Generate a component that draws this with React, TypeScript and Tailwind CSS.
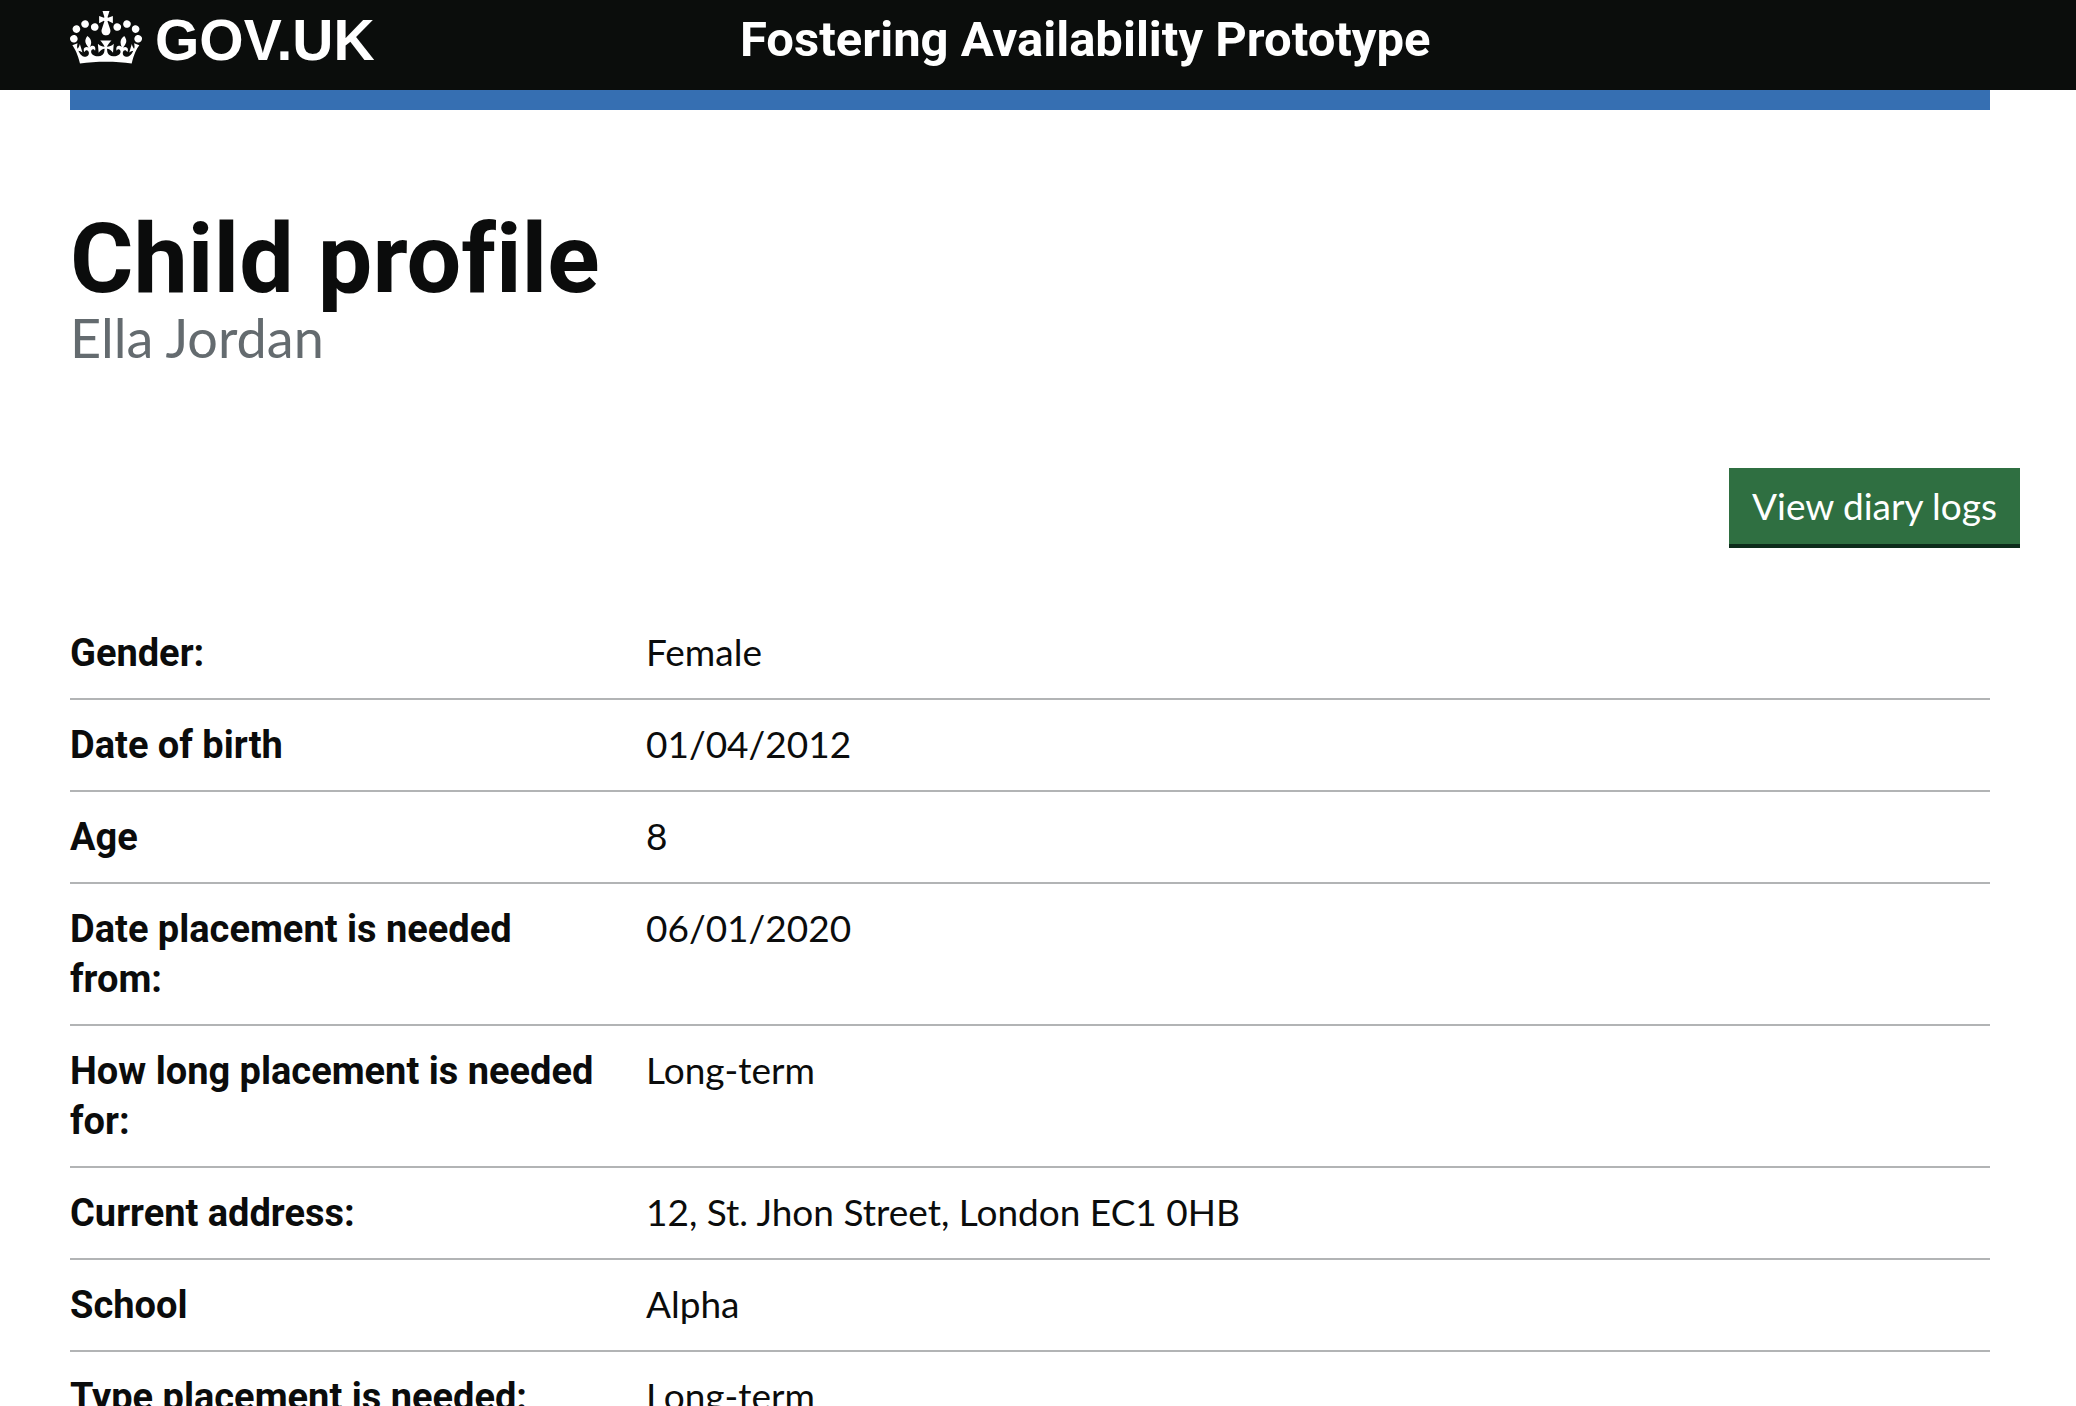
const details = [
  { label: "Gender:", value: "Female" },
  { label: "Date of birth", value: "01/04/2012" },
  { label: "Age", value: "8" },
  { label: "Date placement is needed from:", value: "06/01/2020" },
  { label: "How long placement is needed for:", value: "Long-term" },
  { label: "Current address:", value: "12, St. Jhon Street, London EC1 0HB" },
  { label: "School", value: "Alpha" },
  { label: "Type placement is needed:", value: "Long-term" },
];

function Crown() {
  return (
    <svg aria-hidden="true" viewBox="0 0 132 97" className="h-[53px] w-[72px] shrink-0 fill-current">
      <path
        fillRule="evenodd"
        d="M25 30.2c3.5 1.5 7.7-.2 9.1-3.7 1.5-3.6-.2-7.8-3.9-9.2-3.6-1.4-7.6.3-9.1 3.9-1.4 3.5.3 7.5 3.9 9zM9 39.5c3.6 1.5 7.8-.2 9.2-3.7 1.5-3.6-.2-7.8-3.9-9.1-3.6-1.5-7.6.2-9.1 3.8-1.4 3.5.3 7.5 3.8 9zM4.4 57.2c3.5 1.5 7.7-.2 9.1-3.8 1.5-3.6-.2-7.7-3.9-9.1-3.5-1.5-7.6.3-9.1 3.8-1.4 3.5.3 7.6 3.9 9.1zm38.3-21.4c3.5 1.5 7.7-.2 9.1-3.8 1.5-3.6-.2-7.7-3.9-9.1-3.6-1.5-7.6.3-9.1 3.8-1.3 3.6.4 7.7 3.9 9.1zm64.4-5.6c-3.6 1.5-7.8-.2-9.1-3.7-1.5-3.6.2-7.8 3.8-9.2 3.6-1.4 7.7.3 9.2 3.9 1.3 3.5-.4 7.5-3.9 9zm15.9 9.3c-3.6 1.5-7.7-.2-9.1-3.7-1.5-3.6.2-7.8 3.7-9.1 3.6-1.5 7.7.2 9.2 3.8 1.5 3.5-.3 7.5-3.8 9zm4.7 17.7c-3.6 1.5-7.8-.2-9.2-3.8-1.5-3.6.2-7.7 3.9-9.1 3.6-1.5 7.7.3 9.2 3.8 1.3 3.5-.4 7.6-3.9 9.1zM89.3 35.8c-3.6 1.5-7.8-.2-9.2-3.8-1.4-3.6.2-7.7 3.9-9.1 3.6-1.5 7.7.3 9.2 3.8 1.4 3.6-.3 7.7-3.9 9.1zM69.7 17.7l8.9 4.7V9.3l-8.9 2.8c-.2-.3-.5-.6-.9-.9L72.4 0H59.6l3.5 11.2c-.3.3-.6.5-.9.9l-8.8-2.8v13.1l8.8-4.7c.3.3.6.7.9.9l-5 15.4v.1c-.2.8-.4 1.6-.4 2.4 0 4.1 3.1 7.5 7 8.1h.2c.3 0 .7.1 1 .1.4 0 .7 0 1-.1h.2c4-.6 7.1-4.1 7.1-8.1 0-.8-.1-1.7-.4-2.4V34l-5.1-15.4c.4-.2.7-.6 1-.9zM66 92.8c16.9 0 32.8 1.1 47.1 3.2 4-16.9 8.9-26.7 14-33.5l-9.6-3.4c1 4.9 1.1 7.2 0 10.2-1.5-1.4-3-4.3-4.2-8.7L108.6 76c2.8-2 5-3.2 7.5-3.3-4.4 9.4-10 11.9-13.6 11.2-4.3-.8-6.3-4.6-5.6-7.9 1-4.7 5.7-5.9 8-.5 4.3-8.7-3-11.4-7.6-8.8 7.1-7.2 7.9-13.5 2.1-21.1-8 6.1-8.1 12.3-4.5 20.8-4.7-5.4-12.1-2.5-9.5 6.2 3.4-5.2 7.9-2 7.2 3.1-.6 4.3-6.4 7.8-13.5 7.2-10.3-.9-10.9-8-11.2-13.8 2.5-.5 7.1 1.8 11 7.3L80.2 60c-4.1 4.4-8 5.3-12.3 5.4 1.4-4.4 8-11.6 8-11.6H55.5s6.4 7.2 7.9 11.6c-4.2-.1-8-1-12.3-5.4l1.4 16.4c3.9-5.5 8.5-7.7 10.9-7.3-.3 5.8-.9 12.8-11.1 13.8-7.2.6-12.9-2.9-13.5-7.2-.7-5 3.8-8.3 7.1-3.1 2.7-8.7-4.6-11.6-9.4-6.2 3.7-8.5 3.6-14.7-4.6-20.8-5.8 7.6-5 13.9 2.2 21.1-4.7-2.6-11.9.1-7.7 8.8 2.3-5.5 7.1-4.2 8.1.5.7 3.3-1.3 7.1-5.7 7.9-3.5.7-9-1.8-13.5-11.2 2.5.1 4.7 1.3 7.5 3.3l-4.7-15.4c-1.2 4.4-2.7 7.2-4.3 8.7-1.1-3-.9-5.3 0-10.2l-9.5 3.4c5 6.9 9.9 16.7 14 33.5 14.8-2.1 30.8-3.2 47.7-3.2z"
      />
    </svg>
  );
}

export default function App() {
  return (
    <div className="h-screen overflow-hidden bg-white font-['Lato',sans-serif] text-[37px] leading-[50px] text-[#0b0c0c] [font-variant-ligatures:none]">
      <header className="bg-[#0b0d0c] pr-[86px] pl-[70px] text-white">
        <div className="flex h-[90px] items-start">
          <div className="w-1/3 pt-[11px]">
            <a href="#" className="inline-flex items-start gap-[13px]">
              <Crown />
              <span className="pt-[3px] font-['Liberation_Sans',sans-serif] text-[57px] leading-[53px] font-bold">
                GOV.UK
              </span>
            </a>
          </div>
          <div className="w-2/3 pt-3 pl-[30px]">
            <a href="#" className="block font-['Roboto',sans-serif] text-[49px] leading-[56px] font-bold">
              Fostering Availability Prototype
            </a>
          </div>
        </div>
      </header>

      <div className="pr-[86px] pl-[70px]">
        <div className="h-5 bg-[#366fb2]" />
        <main className="pt-[99px]">
          <h1 className="font-['Roboto',sans-serif] text-[97px] leading-[100px] font-bold">Child profile</h1>
          <p className="text-[54px] leading-[58px] text-[#646b6f]">Ella Jordan</p>

          <div className="-mr-[30px] mt-[101px] flex justify-end">
            <button
              type="button"
              className="h-20 border-b-4 border-[#0d2c1b] bg-[#2f6f41] px-[23px] text-white"
            >
              View diary logs
            </button>
          </div>

          <dl className="mt-[60px]">
            {details.map(({ label, value }) => (
              <div key={label} className="flex items-start border-b-2 border-[#b2b4b5] py-5">
                <dt className="w-[30%] shrink-0 pr-10 font-['Roboto',sans-serif] text-[38px] font-bold">{label}</dt>
                <dd className="flex-1 leading-[48px]">{value}</dd>
              </div>
            ))}
          </dl>
        </main>
      </div>
    </div>
  );
}
